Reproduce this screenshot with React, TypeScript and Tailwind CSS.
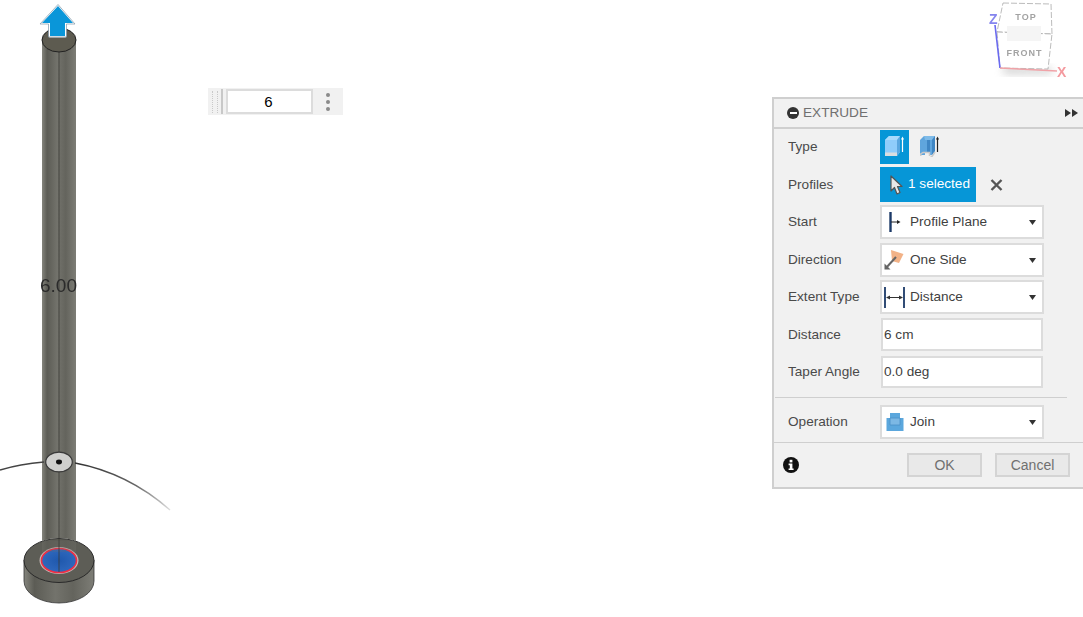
import type { ReactNode } from "react";

function Row({ label, className, children }: { label: string; className: string; children: ReactNode }) {
  return (
    <div className={`flex items-center ${className}`}>
      <span className="w-[106px] shrink-0 pl-[14px] pt-px">{label}</span>
      {children}
    </div>
  );
}

function Select({ icon, value, height }: { icon: ReactNode; value: string; height: string }) {
  return (
    <div className={`relative flex w-[164px] items-center border-2 border-[#dcdcdc] bg-white ${height}`}>
      <span className="flex h-full w-[28px] shrink-0 items-center justify-center">{icon}</span>
      <span className="pt-px text-[#3f3f3f]">{value}</span>
      <svg className="absolute right-[6px] top-1/2 -mt-[2px]" width="7" height="5" viewBox="0 0 7 5">
        <path d="M0 0H7L3.5 5Z" fill="#333" />
      </svg>
    </div>
  );
}

function TextField({ value, height }: { value: string; height: string }) {
  return (
    <div className={`ml-px flex w-[162px] items-center border-2 border-[#dcdcdc] bg-white pl-[1px] pt-px text-[#3f3f3f] ${height}`}>
      {value}
    </div>
  );
}

function CubeIcon() {
  return (
    <svg className="mt-[6px]" width="19" height="20" viewBox="0 0 19 20">
      <path d="M0 4L4 0H15V16L12 20H0Z" fill="#8fcdfb" />
      <path d="M0 4L4 0H15L12 4Z" fill="#a9dafc" />
      <path d="M12 4L15 0V16L12 20Z" fill="#5aa7e0" />
      <path d="M0 16.5H12V20H0Z" fill="#d9dde0" />
      <path d="M17.5 2V16" stroke="#fff" strokeWidth="1.2" />
      <path d="M16 3.5L17.5 0.5L19 3.5Z" fill="#fff" />
    </svg>
  );
}

function ThinIcon() {
  return (
    <svg className="mt-[6px]" width="19" height="21" viewBox="0 0 19 21">
      <path d="M0 4L4 0H15V15L12 19H10V16H5V19H0Z" fill="#5fa5dd" />
      <path d="M4 0H15L12 4H5Z" fill="#7fbbe8" />
      <path d="M7 4H10V16H7Z" fill="#3f86c4" />
      <path d="M12 4L15 0V15L12 19Z" fill="#3f86c4" />
      <path d="M0.8 20V18L3 16.5H9.5V20M10.5 20.5H12L15 16" stroke="#c9c9c9" strokeWidth="1.5" fill="none" />
      <path d="M17.5 2V16" stroke="#222" strokeWidth="1.2" />
      <path d="M16 3.5L17.5 0.5L19 3.5Z" fill="#222" />
    </svg>
  );
}

function ViewportDrawing() {
  return (
    <svg className="absolute inset-0" width="240" height="617" viewBox="0 0 240 617">
      <defs>
        <linearGradient id="steel" x1="0" x2="1" y1="0" y2="0">
          <stop offset="0" stopColor="#85857d" />
          <stop offset="0.15" stopColor="#5c5c55" />
          <stop offset="0.45" stopColor="#73736c" />
          <stop offset="0.7" stopColor="#64645d" />
          <stop offset="1" stopColor="#7d7d76" />
        </linearGradient>
        <linearGradient id="arcFade" x1="77" x2="170" y1="463" y2="510" gradientUnits="userSpaceOnUse">
          <stop offset="0" stopColor="#333" />
          <stop offset="0.6" stopColor="#666" />
          <stop offset="1" stopColor="#ddd" />
        </linearGradient>
        <radialGradient id="hole">
          <stop offset="0" stopColor="#1f58ad" />
          <stop offset="1" stopColor="#2f68bd" />
        </radialGradient>
      </defs>

      {/* base cylinder */}
      <path d="M24 560V581A35 22 0 0 0 94 581V560Z" fill="url(#steel)" stroke="#333" strokeWidth="0.8" />
      <ellipse cx="59" cy="560.5" rx="35" ry="22" fill="#5d5d56" stroke="#2a2a2a" />
      <ellipse cx="59" cy="560.5" rx="19.5" ry="13.6" fill="#c4b8b6" />
      <ellipse cx="59" cy="560.5" rx="17.5" ry="12" fill="url(#hole)" stroke="#ee2f45" strokeWidth="1.6" />

      {/* shaft */}
      <path d="M42 40H76V541A35 22 0 0 0 42 541Z" fill="url(#steel)" />
      <path d="M42 541H76V552H42Z" fill="url(#steel)" opacity="0.2" />
      <path d="M59 40V572" stroke="#3a3a36" strokeWidth="0.8" />
      <ellipse cx="59" cy="40" rx="17" ry="12" fill="#5d5b50" stroke="#222" />

      {/* sketch arc and grip */}
      <path d="M0 470Q20 464 44 462" stroke="#444" strokeWidth="1.4" fill="none" />
      <path d="M75 463Q128 473 170 510" stroke="url(#arcFade)" strokeWidth="1.4" fill="none" />
      <ellipse cx="59" cy="462" rx="13.3" ry="9.8" fill="#cfcfcd" stroke="#3a3a3a" strokeWidth="1.2" />
      <ellipse cx="59" cy="462" rx="3" ry="2.4" fill="#111" />

      {/* arrow */}
      <path d="M58 6L73 23H65V36H50V23H42Z" fill="#0a96d9" stroke="#fff" strokeWidth="3" paintOrder="stroke" strokeLinejoin="round" />
      <path d="M58 4.5L75 24H66.5V37H48.5V24H40Z" fill="none" stroke="#7f97a8" strokeWidth="0.7" strokeLinejoin="round" />
    </svg>
  );
}

function ViewCube() {
  return (
    <svg className="absolute left-[980px] top-0 blur-[0.4px]" width="103" height="85" viewBox="0 0 103 85">
      <defs>
        <filter id="soft" x="-30%" y="-30%" width="160%" height="160%">
          <feGaussianBlur stdDeviation="4" />
        </filter>
      </defs>
      <path d="M22 66L70 68L74 74L24 74Z" fill="#aaa" opacity="0.55" filter="url(#soft)" />
      <path d="M23 3L71 4L72 34L17 32Z" fill="#fff" stroke="#a9a9a9" strokeWidth="0.8" strokeDasharray="6 2" />
      <path d="M17 32L72 34L68 69L20 68Z" fill="#fff" stroke="#a9a9a9" strokeWidth="0.8" strokeDasharray="6 2" />
      <path d="M27 26H61V41H27Z" fill="#f5f5f5" />
      <text x="46" y="20" textAnchor="middle" className="fill-[#a3a3a3] text-[9px] font-bold tracking-[1px]">TOP</text>
      <text x="44.5" y="56" textAnchor="middle" className="fill-[#a3a3a3] text-[9px] font-bold tracking-[1px]">FRONT</text>
      <path d="M20 68L15 25" stroke="#6a6af0" strokeWidth="1.6" />
      <path d="M20 68L77 71" stroke="#f0a3a8" strokeWidth="1.6" />
      <text x="9" y="24" className="fill-[#8585ee] text-[14px] font-bold">Z</text>
      <text x="77" y="77" className="fill-[#f49a9f] text-[14px] font-bold">X</text>
    </svg>
  );
}

export default function App() {
  return (
    <div className="relative h-[617px] w-[1083px] overflow-hidden bg-white font-['Liberation_Sans',Arial,sans-serif] text-[13.6px] text-[#4a4a4a]">
      <ViewportDrawing />
      <div className="absolute left-[40px] top-[275px] text-[19px] leading-[22px] text-[#2b2b2b] blur-[0.3px]">6.00</div>
      <ViewCube />

      {/* floating value input */}
      <div className="absolute left-[208px] top-[88px] flex h-[27px] w-[135px] items-center bg-[#f1f1f1]">
        <div className="ml-[4px] h-[22px] w-[6px] border-x border-dotted border-[#c9c9c9]" />
        <div className="ml-[3px] h-[25px] w-[2px] bg-[#c8c8c8]" />
        <div className="ml-[3px] flex h-[25px] w-[87px] items-center justify-center border-2 border-[#dcdcdc] bg-white pr-[2px] pt-[2px] text-[15px] text-black">
          6
        </div>
        <div className="ml-[13px] flex flex-col gap-[3px]">
          <span className="size-[4px] rounded-full bg-[#8a8a8a]" />
          <span className="size-[4px] rounded-full bg-[#8a8a8a]" />
          <span className="size-[4px] rounded-full bg-[#8a8a8a]" />
        </div>
      </div>

      {/* extrude panel */}
      <div className="absolute left-[772px] top-[97px] w-[311px] border-y-2 border-l-2 border-[#cfcfcf] bg-[#f1f1f1]">
        <div className="flex h-[30px] items-center border-b-2 border-[#cfcfcf] pl-[13px] pr-[5px]">
          <span className="flex size-[12px] items-center justify-center rounded-full bg-[#333]">
            <span className="h-[2px] w-[7px] bg-white" />
          </span>
          <span className="ml-[4px] text-[#707070]">EXTRUDE</span>
          <svg className="ml-auto" width="13" height="8" viewBox="0 0 13 8">
            <path d="M0 0L6 4L0 8ZM7 0L13 4L7 8Z" fill="#333" />
          </svg>
        </div>

        <Row label="Type" className="mt-px h-[34px]">
          <div className="flex h-[34px] w-[29px] items-start justify-end bg-[#0696d7] pr-[5px]">
            <CubeIcon />
          </div>
          <div className="ml-[11px] flex h-[34px] items-start">
            <ThinIcon />
          </div>
        </Row>

        <Row label="Profiles" className="mt-[3px] h-[35px]">
          <div className="flex h-[35px] w-[96px] items-center bg-[#0696d7] pl-[9px] text-white">
            <svg width="14" height="20" viewBox="0 0 14 20">
              <path d="M2 1V16L5.5 12.5L8 19L11 17.5L8.5 11.5H13Z" fill="#e8e8e8" stroke="#555" strokeWidth="1.2" strokeLinejoin="round" />
            </svg>
            <span className="ml-[5px]">1 selected</span>
          </div>
          <svg className="ml-[14px]" width="13" height="12" viewBox="0 0 13 12">
            <path d="M1.5 1L11.5 11M11.5 1L1.5 11" stroke="#555" strokeWidth="2.4" />
          </svg>
        </Row>

        <Row label="Start" className="mt-[3px] h-[34px]">
          <Select
            height="h-[34px]"
            value="Profile Plane"
            icon={
              <svg className="mr-[3px]" width="12" height="20" viewBox="0 0 12 20">
                <path d="M1.5 0V20" stroke="#1c3a68" strokeWidth="2.4" />
                <path d="M2 10H9" stroke="#222" />
                <path d="M8 8L11.5 10L8 12Z" fill="#222" />
              </svg>
            }
          />
        </Row>

        <Row label="Direction" className="mt-[4px] h-[34px]">
          <Select
            height="h-[34px]"
            value="One Side"
            icon={
              <svg className="mr-[4px]" width="20" height="20" viewBox="0 0 20 20">
                <path d="M7 0L19.5 4L15 13L8 11Z" fill="#f2b287" />
                <path d="M2 18L12 7" stroke="#666" strokeWidth="2" />
                <path d="M0.5 19.5V13.5L6.5 19.5Z" fill="#666" />
              </svg>
            }
          />
        </Row>

        <Row label="Extent Type" className="mt-[3px] h-[34px]">
          <Select
            height="h-[34px]"
            value="Distance"
            icon={
              <svg className="mr-[3px]" width="21" height="21" viewBox="0 0 21 21">
                <path d="M1 0V21M20 0V21" stroke="#1c3a68" strokeWidth="1.8" />
                <path d="M3 10.5H18" stroke="#333" />
                <path d="M2 10.5L6 8.5V12.5ZM19 10.5L15 8.5V12.5Z" fill="#333" />
              </svg>
            }
          />
        </Row>

        <Row label="Distance" className="mt-[4px] h-[33px]">
          <TextField value="6 cm" height="h-[33px]" />
        </Row>

        <Row label="Taper Angle" className="mt-[5px] h-[32px]">
          <TextField value="0.0 deg" height="h-[32px]" />
        </Row>

        <div className="ml-px mt-[9px] h-[1px] w-[292px] bg-[#cfcfcf]" />

        <Row label="Operation" className="mt-[7px] h-[34px]">
          <Select
            height="h-[34px]"
            value="Join"
            icon={
              <svg className="mr-[2px]" width="18" height="18" viewBox="0 0 18 18">
                <path d="M4 0H14V5H17.5V18H0.5V5H4Z" fill="#5ba7dd" />
                <path d="M4 5H14V12H4Z" fill="#7cb8e4" stroke="#4a90c6" strokeWidth="0.8" />
              </svg>
            }
          />
        </Row>

        <div className="mt-[3px] flex h-[45px] items-center border-t border-[#cfcfcf] pl-[9px] pr-[13px]">
          <svg width="16" height="16" viewBox="0 0 16 16">
            <circle cx="8" cy="8" r="8" fill="#111" />
            <rect x="6.6" y="2.8" width="2.8" height="2.6" fill="#fff" />
            <path d="M5.6 6.6H9.4V11.4H10.6V13H5.6V11.4H6.8V8.2H5.6Z" fill="#fff" />
          </svg>
          <div className="ml-auto flex h-[24px] w-[75px] items-center justify-center border-2 border-[#d4d4d4] bg-[#e9e9e9] text-[14px] text-[#707070]">
            OK
          </div>
          <div className="ml-[13px] flex h-[24px] w-[75px] items-center justify-center border-2 border-[#d4d4d4] bg-[#e9e9e9] text-[14px] text-[#707070]">
            Cancel
          </div>
        </div>
      </div>
    </div>
  );
}
